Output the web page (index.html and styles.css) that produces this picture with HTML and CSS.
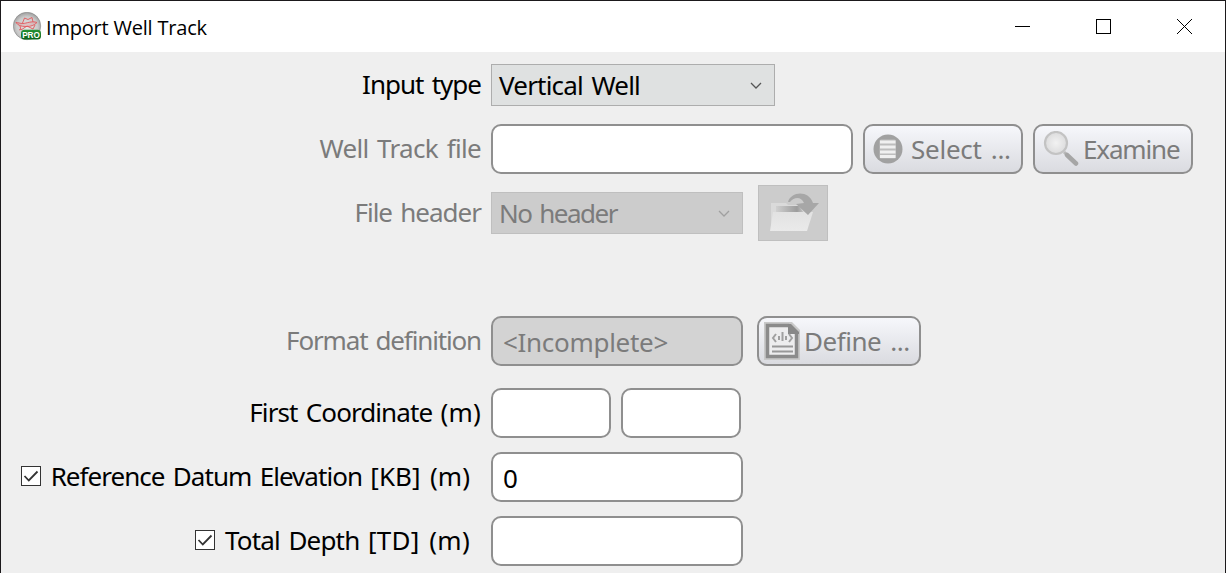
FILE: index.html
```
<!DOCTYPE html>
<html lang="en">
<head>
<meta charset="utf-8">
<title>Import Well Track</title>
<link rel="stylesheet" href="styles.css">
</head>
<body>
<div class="window">
  <header class="titlebar">
    <svg class="app-icon" viewBox="0 0 30 30">
      <defs><radialGradient id="ball" cx=".5" cy=".55" r=".55"><stop offset="0" stop-color="#e6e6e6"/><stop offset=".7" stop-color="#cacaca"/><stop offset="1" stop-color="#9d9d9d"/></radialGradient>
      <linearGradient id="pro" x2="0" y2="1"><stop stop-color="#259235"/><stop offset="1" stop-color="#08621a"/></linearGradient></defs>
      <circle cx="14" cy="14" r="13.7" fill="url(#ball)" stroke="#858585" stroke-width=".6"/>
      <g fill="none" stroke="#e2575b" stroke-width=".9"><path fill="#e2575b" fill-opacity=".2" d="M3 10.500c2 0 4 1 7 1s9-3 14-1c-3 3-6 4-11 4s-8-1-10-4z"/><path d="M9.500 11l2-5 3.500 1.500 4-2 1 4.500M7 14l1 4 6-4 6 3 2-4M6 18l2-1"/></g>
      <rect x="8" y="17.8" width="20" height="9.8" rx="3.500" fill="url(#pro)"/>
      <text class="pro-text" x="18" y="25.6" text-anchor="middle">PRO</text>
    </svg>
    <h1 class="title">Import Well Track</h1>
    <svg class="controls" viewBox="0 0 180 20" shape-rendering="crispEdges">
      <path d="M0 10.5h15M81.500 3.500h14v14h-14z"/>
      <path d="M162 3l15 15M177 3l-15 15" shape-rendering="auto"/>
    </svg>
  </header>
  <main class="form">
    <div class="row">
      <label class="label"><span class="t-input">Input type</span></label>
      <div class="select select-wide"><span class="t-vertical">Vertical Well</span><svg class="chevron" viewBox="0 0 12 8"><path d="M1 1l5 5 5-5"/></svg></div>
    </div>
    <div class="row disabled">
      <label class="label"><span class="t-track">Well Track file</span></label>
      <div class="field field-file"></div>
      <button class="button button-select">
        <svg class="icon-list" viewBox="0 0 30 30"><circle cx="15" cy="15" r="14.500" fill="#a1a1a1"/><rect x="6.500" y="5.500" width="16.500" height="19" rx="1.500" fill="#bdbdbd"/><path d="M7 8h15.500M7 13h15.500M7 18h15.500M7 22.500h15.500" stroke="#f0f0f0" stroke-width="3"/></svg>
        <span class="t-select">Select ...</span>
      </button>
      <button class="button button-examine">
        <svg class="icon-glass" viewBox="0 0 36 36"><defs><radialGradient id="lens"><stop offset="0" stop-color="#f2f2f2"/><stop offset="1" stop-color="#dcdcdd"/></radialGradient></defs><path d="M21 21l4 4" stroke="#b8b8b8" stroke-width="3"/><path d="M24 24l9 8.500" stroke="#a6a6a6" stroke-width="4.500" stroke-linecap="round"/><circle cx="13" cy="12" r="11" fill="url(#lens)" stroke="#c3c3c3" stroke-width="2.200"/></svg>
        <span class="t-examine">Examine</span>
      </button>
    </div>
    <div class="row disabled">
      <label class="label"><span class="t-header">File header</span></label>
      <div class="select select-off"><span class="t-none">No header</span><svg class="chevron" viewBox="0 0 12 8"><path d="M1 1l5 5 5-5"/></svg></div>
      <button class="open-button">
        <svg class="icon-folder" viewBox="0 0 52 42"><defs><linearGradient id="paper" x2="1" y2="0"><stop stop-color="#d0d0d0"/><stop offset=".75" stop-color="#9c9c9c"/><stop offset="1" stop-color="#c8c8c8"/></linearGradient><linearGradient id="front" x2="0" y2="1"><stop stop-color="#e2e2e2"/><stop offset="1" stop-color="#eaeaea"/></linearGradient></defs>
          <path d="M3 11h15l2 2h18v20H3z" fill="#dadada"/><path d="M8 14h23l5 7H8z" fill="url(#paper)"/><path d="M5 20h40l-6 19H2z" fill="url(#front)"/><path d="M20 10C23-1 41-2 45 11h6L40 23 28 12l8-1C33 4 26 5 22 10z" fill="#a7a7a7"/></svg>
      </button>
    </div>
    <div class="row spacer"></div>
    <div class="row disabled">
      <label class="label"><span class="t-format">Format definition</span></label>
      <div class="field field-mid field-off"><span class="t-incomplete">&lt;Incomplete&gt;</span></div>
      <button class="button button-define">
        <svg class="icon-code" viewBox="0 0 36 38"><path d="M0 0h28l8 8v30H0z" fill="#c9c9c9"/><path d="M3.500 3.500h21l8 8v23h-29z" fill="#ededee" stroke="#8b8b8b" stroke-width="3.500"/><path d="M24 2h3l8 8v2H24z" fill="#888"/><path d="M12 12l-3 4 3 4M25 12l3 4-3 4M18.500 10v9M15 14v4M22 14v4" fill="none" stroke="#a0a0a0" stroke-width="2"/><path d="M8 24.500h21M8 29.500h21" stroke="#989898" stroke-width="2"/></svg>
        <span class="t-define">Define ...</span>
      </button>
    </div>
    <div class="row coordinate-row">
      <label class="label"><span class="t-first">First Coordinate <span class="unit-m">(m)</span></span></label>
      <div class="field field-coord"></div>
      <div class="field field-coord"></div>
    </div>
    <div class="row">
      <label class="label label-check"><svg class="check" viewBox="0 0 20 20"><rect x=".5" y=".5" width="19" height="19"/><path d="M3.500 10l4.300 4.500L16.500 5.500"/></svg><span class="t-reference">Reference Datum Elevation <span class="unit-kb">[KB] (m)</span></span></label>
      <div class="field field-mid"><span class="t-zero">0</span></div>
    </div>
    <div class="row">
      <label class="label label-check"><svg class="check" viewBox="0 0 20 20"><rect x=".5" y=".5" width="19" height="19"/><path d="M3.500 10l4.300 4.500L16.500 5.500"/></svg><span class="t-depth">Total Depth <span class="unit-td">[TD] (m)</span></span></label>
      <div class="field field-mid"></div>
    </div>
  </main>
</div>
</body>
</html>
```
FILE: styles.css
```
* { box-sizing: border-box; }
body { margin: 0; background: #efefef; font: 26px/36px "Noto Sans", sans-serif; color: #000; overflow: hidden; }
span { white-space: nowrap; word-spacing: 2.5px; padding-bottom: 2px; }
.window { height: 573px; border: 1px solid #1b191b; border-bottom: 0; background: #efefef; }
.titlebar { height: 51px; background: #fff; display: flex; align-items: center; padding: 0 30px 0 12px; }
.app-icon { width: 30px; height: 30px; flex: none; }
.pro-text { font: bold 8.2px "Liberation Sans", sans-serif; fill: #fff; }
.title { margin: 2px auto 0 3px; font: 20px/30px "Open Sans", sans-serif; letter-spacing: -.2px; white-space: nowrap; }
.controls { width: 180px; height: 20px; margin-top: -1px; flex: none; fill: none; stroke: #000; stroke-width: 1; }
.form { padding-top: 1px; }
.row { height: 64px; display: flex; align-items: center; }
.disabled { color: #7b7b7b; }
.label { width: 480px; margin-right: 10px; display: flex; justify-content: flex-end; align-items: center; flex: none; }
.label-check { padding-right: 11px; gap: 10px; }
.check { width: 20px; height: 20px; margin-bottom: 2px; flex: none; }
.check rect { fill: #fff; stroke: #333; }
.check path { fill: none; stroke: #333; stroke-width: 1.8; }
.select { height: 42px; border: 1px solid #adadad; background: #dfe1e1; display: flex; justify-content: space-between; align-items: center; padding: 2px 12px 0 7px; }
.select-wide { width: 284px; }
.select-off { width: 252px; background: #ccc; border-color: #bfbfbf; }
.chevron { width: 12px; height: 8px; margin-bottom: 1px; fill: none; stroke: #555; stroke-width: 1.3; }
.select-off .chevron { stroke: #a0a0a0; }
.field { height: 50px; border: 2px solid #8f8f8f; border-radius: 10px; background: #fff; padding: 4px 10px 0; display: flex; align-items: center; flex: none; }
.field-file { width: 362px; }
.field-mid { width: 252px; }
.field-coord { width: 120px; margin-right: 10px; }
.field-off { background: #d3d3d3; }
.button { height: 50px; border: 2px solid #8f8f8f; border-radius: 10px; background: linear-gradient(#f6f7fb, #dadbe0); display: flex; align-items: center; padding: 0; font: inherit; color: inherit; flex: none; }
.button span { padding-bottom: 0; }
.button-select { width: 160px; margin-left: 10px; padding-left: 8px; }
.button-examine { width: 160px; margin-left: 10px; padding-left: 8px; }
.button-define { width: 164px; margin-left: 14px; padding-left: 5px; }
.icon-list { width: 30px; height: 30px; margin-right: 8px; }
.icon-glass { width: 36px; height: 36px; margin-right: 4px; }
.icon-code { width: 36px; height: 38px; margin-right: 4px; }
.open-button { width: 70px; height: 56px; margin-left: 15px; padding: 0 0 0 2px; border: 1px solid #bfbfbf; background: #ccc; display: flex; align-items: center; justify-content: center; }
.icon-folder { width: 52px; height: 42px; }
.coordinate-row { margin-top: 8px; }
.t-input { letter-spacing: -1px; }
.t-vertical { letter-spacing: -.8px; }
.t-track { letter-spacing: -.67px; }
.t-select { letter-spacing: -.25px; }
.t-examine { letter-spacing: -1.15px; }
.t-header { letter-spacing: -1px; }
.t-none { letter-spacing: -1.5px; }
.t-format { letter-spacing: -1.15px; }
.t-incomplete { letter-spacing: -.3px; }
.t-define { letter-spacing: -.45px; }
.t-first { letter-spacing: -.92px; }
.unit-m { letter-spacing: .2px; }
.t-reference { letter-spacing: -.96px; }
.unit-kb { letter-spacing: .05px; }
.t-depth { letter-spacing: -.82px; }
.unit-td { letter-spacing: .3px; }
```
